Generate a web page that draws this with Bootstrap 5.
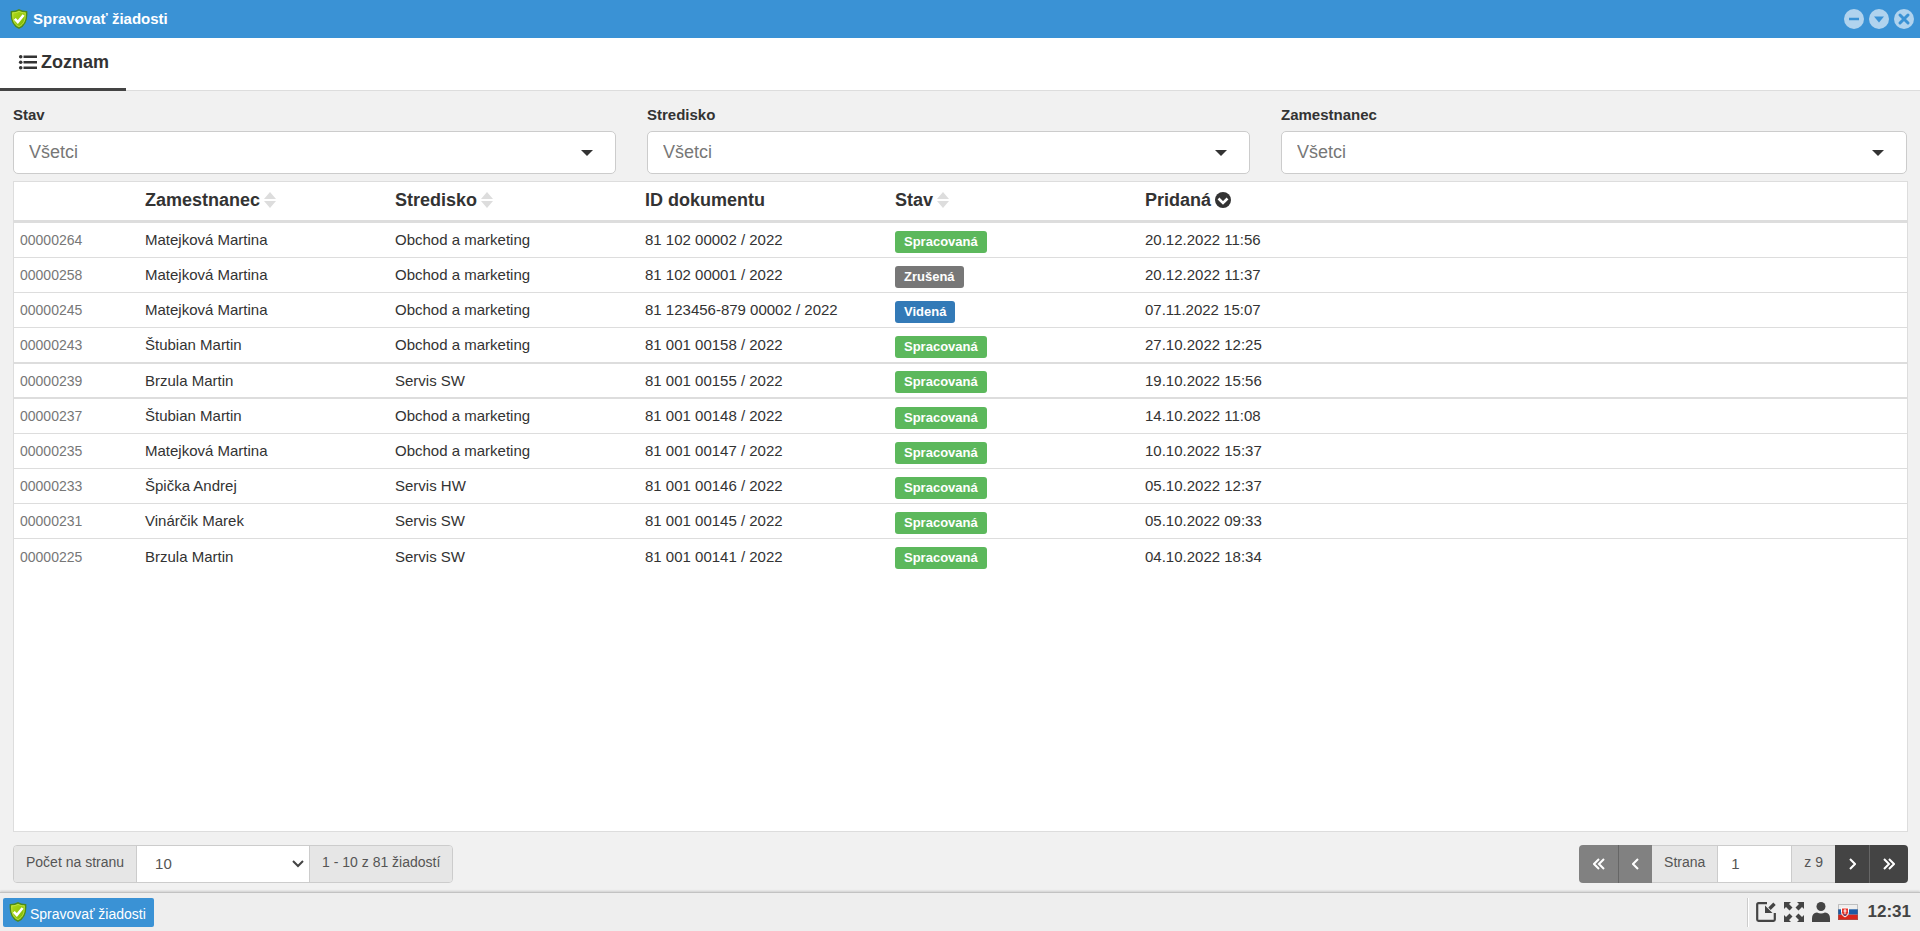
<!DOCTYPE html>
<html lang="sk">
<head>
<meta charset="utf-8">
<meta name="viewport" content="width=device-width, initial-scale=1">
<title>Spravovať žiadosti</title>
<link href="https://cdn.jsdelivr.net/npm/bootstrap@5.3.0/dist/css/bootstrap.min.css" rel="stylesheet">
<style>
body{font-family:"Liberation Sans",Arial,sans-serif;font-size:15px;line-height:20px;color:#333;background:#f1f1f1}
button,input,select{font-family:inherit}
svg{display:block;flex:none}
.titlebar{height:38px;background:#3a92d5;color:#fff;padding:0 6px 0 10px;gap:5px}
.titlebar h1{font-size:15px;line-height:20px;font-weight:700}
.winbtn{width:20px;height:20px;color:#b0d3ee}
.tabs{height:53px;background:#fff;border-bottom:1px solid #ddd}
.tabs .tab{height:53px;padding:0 17px 3px 18px;font-size:18px;font-weight:700;color:#333;text-decoration:none;border-bottom:3px solid #444}
.filters{padding:14px 5px 7px 13px}
.filters .field{padding-right:31px}
.filters .field:last-child{padding-right:8px}
.filters label{font-weight:700;margin-bottom:6px}
.filters select{height:43px;font-size:18px;line-height:24px;color:#777;border:1px solid #ccc;border-radius:5px;padding:0 48px 2px 15px;box-shadow:none;
background:#fff url("data:image/svg+xml,%3Csvg xmlns='http://www.w3.org/2000/svg' width='12' height='6'%3E%3Cpath d='M0 0h12L6 6z' fill='%23333'/%3E%3C/svg%3E") no-repeat right 22px center/12px 6px}
.listbox{margin:0 12px 0 13px;background:#fff;border:1px solid #ddd}
.requests{table-layout:fixed;width:100%;border-collapse:separate;border-spacing:0}
.requests th{height:41px;padding:0 6px 2px;font-size:18px;border-bottom:3px solid #ddd}
.requests td{height:35px;padding:0 6px;border-bottom:1px solid #ddd}
.requests td:first-child{font-size:14px;color:#777}
.requests tr.strong td{border-bottom-width:2px}
.requests tr.tall td{height:36px}
.requests tbody tr:last-child td{border-bottom:0}
.c-id{width:125px}
.c-col{width:250px}
.tag{display:block;width:max-content;height:22px;margin-top:3px;padding:0 9px;border-radius:3px;color:#fff;font-size:13px;line-height:21px;font-weight:700}
.tag-done{background:#5cb85c}
.tag-void{background:#777}
.tag-seen{background:#337ab7}
.pager{padding:13px 12px 9px 13px}
.grp{height:38px;border:1px solid #ccc;border-radius:4px;overflow:hidden;color:#555}
.grp .addon{background:#e6e6e6;font-size:14px;padding:0 12px 4px}
.grp .ctl{border:0;border-left:1px solid #ccc;border-right:1px solid #ccc;font-size:15px;color:#555;background-color:#fff;border-radius:0;outline:0}
.grp select.ctl{width:174px;appearance:none;padding:0 36px 0 18px;background:#fff url("data:image/svg+xml,%3Csvg xmlns='http://www.w3.org/2000/svg' width='12' height='8'%3E%3Cpath d='M1 1l5 5 5-5' fill='none' stroke='%23444' stroke-width='2'/%3E%3C/svg%3E") no-repeat right 5px center/12px 8px}
.grp input.ctl{width:75px;padding:0 13px}
.pagenav{border:0}
.pagenav .addon,.pagenav .ctl{border-top:1px solid #ccc;border-bottom:1px solid #ccc}
.pg{border:0;background:#444;color:#fff;width:39px;padding:0;display:grid;place-items:center}
.pg:disabled{background:#818181}
.pg-one{width:34px}
.pg-line{border-left:1px solid #666}
.taskbar{height:39px;border-top:1px solid #c2c2c2;background:#eee;box-shadow:0 -1px 2px rgba(0,0,0,.15);padding:0 9px 0 3px;color:#444}
.task{height:29px;border:0;border-radius:2px;background:#3a92d5;color:#fff;font-size:14px;padding:3px 8px 0 6px;gap:3px}
.tray{height:29px;border-left:1px solid #ccc;box-shadow:inset 1px 0 #fff;padding-left:8px;gap:8px}
.tray button{border:0;background:none;padding:0;color:#444}
.clock{font-size:17px;font-weight:700;padding-left:2px}
</style>
</head>
<body class="d-flex flex-column min-vh-100">
<svg class="position-absolute" width="0" height="0" aria-hidden="true">
<defs>
<linearGradient id="g" x1="0" y1="0" x2="1" y2="1"><stop offset="0" stop-color="#b4dd1c"/><stop offset="1" stop-color="#79b400"/></linearGradient>
</defs>
<symbol id="shield" viewBox="0 0 18 20"><path d="M9 .8c2 1.300 4.500 1.800 7.600 1.800.6 7.500-.6 13.400-7.600 16.600C2 16 .8 10.100 1.400 2.600 4.500 2.600 7 2.100 9 .8z" fill="url(#g)" stroke="#4d8a1c" stroke-width="1.400"/><path d="M9 2.400c1.800 1 3.800 1.400 6.200 1.500.3 6.300-.8 11-6.200 13.700C3.600 14.900 2.500 10.200 2.800 3.900 5.200 3.800 7.200 3.400 9 2.400z" fill="none" stroke="#c9ea55" stroke-width=".7"/><path d="M4.800 9.800l3 3.200 5.800-7" fill="none" stroke="#fff" stroke-width="2.600"/></symbol>
<symbol id="sort" viewBox="0 0 12 16"><path d="M0 7l6-7 6 7zM0 9h12l-6 7z" fill="#ddd"/></symbol>
</svg>

<header class="titlebar d-flex align-items-center">
  <svg width="18" height="20"><use href="#shield"/></svg>
  <h1 class="m-0 flex-grow-1">Spravovať žiadosti</h1>
  <div class="d-flex" style="gap:5px">
    <button class="winbtn border-0 bg-transparent p-0" aria-label="Minimalizovať"><svg width="20" height="20"><circle cx="10" cy="10" r="10" fill="currentColor"/><path d="M5 10h10" stroke="#3a92d5" stroke-width="2.500"/></svg></button>
    <button class="winbtn border-0 bg-transparent p-0" aria-label="Obnoviť"><svg width="20" height="20"><circle cx="10" cy="10" r="10" fill="currentColor"/><path d="M5 7.500h10l-5 6z" fill="#3a92d5"/></svg></button>
    <button class="winbtn border-0 bg-transparent p-0" aria-label="Zavrieť"><svg width="20" height="20"><circle cx="10" cy="10" r="10" fill="currentColor"/><path d="M6 6l8 8M14 6l-8 8" stroke="#3a92d5" stroke-width="3" stroke-linecap="round"/></svg></button>
  </div>
</header>

<nav class="tabs d-flex">
  <a class="tab d-flex align-items-center" href="#zoznam"><svg width="19" height="16" class="me-1" fill="#333"><path d="M5.500 1.500H19V4H5.500zM5.500 7H19v2.400H5.500zM5.500 12.500H19V15H5.500z"/><circle cx="2.700" cy="2.700" r="1.800"/><circle cx="2.700" cy="8.200" r="1.800"/><circle cx="2.700" cy="13.700" r="1.800"/></svg>Zoznam</a>
</nav>

<main id="zoznam" class="d-flex flex-column flex-grow-1">
  <form class="filters row g-0">
    <div class="field col-4"><label class="d-block" for="stav">Stav</label><select class="form-select" id="stav"><option>Všetci</option></select></div>
    <div class="field col-4"><label class="d-block" for="stredisko">Stredisko</label><select class="form-select" id="stredisko"><option>Všetci</option></select></div>
    <div class="field col-4"><label class="d-block" for="zamestnanec">Zamestnanec</label><select class="form-select" id="zamestnanec"><option>Všetci</option></select></div>
  </form>

  <section class="listbox flex-grow-1">
    <table class="requests">
      <colgroup><col class="c-id"><col class="c-col"><col class="c-col"><col class="c-col"><col class="c-col"><col></colgroup>
      <thead><tr>
        <th></th>
        <th><span class="d-flex align-items-center gap-1">Zamestnanec <svg width="12" height="16"><use href="#sort"/></svg></span></th>
        <th><span class="d-flex align-items-center gap-1">Stredisko <svg width="12" height="16"><use href="#sort"/></svg></span></th>
        <th>ID dokumentu</th>
        <th><span class="d-flex align-items-center gap-1">Stav <svg width="12" height="16"><use href="#sort"/></svg></span></th>
        <th><span class="d-flex align-items-center gap-1">Pridaná <svg width="16" height="16"><circle cx="8" cy="8" r="8" fill="#333"/><path d="M3.500 6.500L8 11l4.500-4.500" fill="none" stroke="#fff" stroke-width="2.600"/></svg></span></th>
      </tr></thead>
      <tbody>
        <tr><td>00000264</td><td>Matejková Martina</td><td>Obchod a marketing</td><td>81 102 00002 / 2022</td><td><span class="tag tag-done">Spracovaná</span></td><td>20.12.2022 11:56</td></tr>
        <tr><td>00000258</td><td>Matejková Martina</td><td>Obchod a marketing</td><td>81 102 00001 / 2022</td><td><span class="tag tag-void">Zrušená</span></td><td>20.12.2022 11:37</td></tr>
        <tr><td>00000245</td><td>Matejková Martina</td><td>Obchod a marketing</td><td>81 123456-879 00002 / 2022</td><td><span class="tag tag-seen">Videná</span></td><td>07.11.2022 15:07</td></tr>
        <tr class="strong tall"><td>00000243</td><td>Štubian Martin</td><td>Obchod a marketing</td><td>81 001 00158 / 2022</td><td><span class="tag tag-done">Spracovaná</span></td><td>27.10.2022 12:25</td></tr>
        <tr class="strong"><td>00000239</td><td>Brzula Martin</td><td>Servis SW</td><td>81 001 00155 / 2022</td><td><span class="tag tag-done">Spracovaná</span></td><td>19.10.2022 15:56</td></tr>
        <tr><td>00000237</td><td>Štubian Martin</td><td>Obchod a marketing</td><td>81 001 00148 / 2022</td><td><span class="tag tag-done">Spracovaná</span></td><td>14.10.2022 11:08</td></tr>
        <tr><td>00000235</td><td>Matejková Martina</td><td>Obchod a marketing</td><td>81 001 00147 / 2022</td><td><span class="tag tag-done">Spracovaná</span></td><td>10.10.2022 15:37</td></tr>
        <tr><td>00000233</td><td>Špička Andrej</td><td>Servis HW</td><td>81 001 00146 / 2022</td><td><span class="tag tag-done">Spracovaná</span></td><td>05.10.2022 12:37</td></tr>
        <tr><td>00000231</td><td>Vinárčik Marek</td><td>Servis SW</td><td>81 001 00145 / 2022</td><td><span class="tag tag-done">Spracovaná</span></td><td>05.10.2022 09:33</td></tr>
        <tr><td>00000225</td><td>Brzula Martin</td><td>Servis SW</td><td>81 001 00141 / 2022</td><td><span class="tag tag-done">Spracovaná</span></td><td>04.10.2022 18:34</td></tr>
      </tbody>
    </table>
  </section>

  <div class="pager d-flex justify-content-between">
    <div class="grp d-flex">
      <label class="addon d-flex align-items-center" for="pocet">Počet na stranu</label>
      <select class="ctl" id="pocet"><option>10</option></select>
      <span class="addon d-flex align-items-center">1 - 10 z 81 žiadostí</span>
    </div>
    <div class="grp pagenav d-flex">
      <button class="pg" disabled aria-label="Prvá strana"><svg width="12" height="12" fill="none" stroke="currentColor" stroke-width="2"><path d="M6 1L1 6l5 5M11 1L6 6l5 5"/></svg></button>
      <button class="pg pg-one pg-line" disabled aria-label="Predchádzajúca strana"><svg width="7" height="12" fill="none" stroke="currentColor" stroke-width="2"><path d="M6 1L1 6l5 5"/></svg></button>
      <label class="addon d-flex align-items-center" for="strana">Strana</label>
      <input class="ctl" id="strana" type="text" value="1">
      <span class="addon d-flex align-items-center">z 9</span>
      <button class="pg pg-one" aria-label="Ďalšia strana"><svg width="7" height="12" fill="none" stroke="currentColor" stroke-width="2"><path d="M1 1l5 5-5 5"/></svg></button>
      <button class="pg pg-line" aria-label="Posledná strana"><svg width="12" height="12" fill="none" stroke="currentColor" stroke-width="2"><path d="M1 1l5 5-5 5M6 1l5 5-5 5"/></svg></button>
    </div>
  </div>
</main>

<footer class="taskbar d-flex align-items-center justify-content-between">
  <button class="task d-flex align-items-center"><svg width="18" height="20" class="mb-1"><use href="#shield"/></svg>Spravovať žiadosti</button>
  <div class="tray d-flex align-items-center">
    <button aria-label="Zbaliť okná"><svg width="20" height="20" fill="none" stroke="currentColor"><path d="M11 1.200H2.500Q1.200 1.200 1.200 2.500v15q0 1.300 1.300 1.300h15q1.300 0 1.300-1.300V11" stroke-width="2.200"/><path d="M18.500 1.800l-5 5" stroke-width="3.400"/><path d="M9 3.500V11h7.500z" fill="currentColor" stroke="none"/></svg></button>
    <button aria-label="Celá obrazovka"><svg width="20" height="20"><path d="M0 0h7L5 2l3.500 3.500-3 3L2 5 0 7zM20 0v7l-2-2-3.500 3.500-3-3L15 2l-2-2zM0 20v-7l2 2 3.500-3.500 3 3L5 18l2 2zM20 20h-7l2-2-3.500-3.500 3-3L18 15l2-2z" fill="currentColor"/></svg></button>
    <button aria-label="Používateľ"><svg width="18" height="20" fill="currentColor"><circle cx="9" cy="4.500" r="4.500"/><path d="M0 20v-3.500Q0 11 5 10.500q4 2 8 0 5 .5 5 6V20z"/></svg></button>
    <button aria-label="Slovenčina"><svg width="20" height="16"><path d="M0 0h20v5.300H0z" fill="#eee"/><path d="M0 5.300h20v5.400H0z" fill="#1c5ba5"/><path d="M0 10.700h20V16H0z" fill="#d9261c"/><path d="M3.500 4h7v4.500q0 3-3.500 4.500-3.500-1.500-3.500-4.500z" fill="#e5352b" stroke="#fff"/><path d="M7 5v5M5.500 7h3" stroke="#fff"/><path d="M5 10.500h4l-2 1.500z" fill="#1c5ba5"/><path d="M.5.500h19v15H.5z" fill="none" stroke="#777" stroke-opacity=".4"/></svg></button>
    <time class="clock">12:31</time>
  </div>
</footer>
<script src="https://cdn.jsdelivr.net/npm/bootstrap@5.3.0/dist/js/bootstrap.bundle.min.js"></script>
</body>
</html>
